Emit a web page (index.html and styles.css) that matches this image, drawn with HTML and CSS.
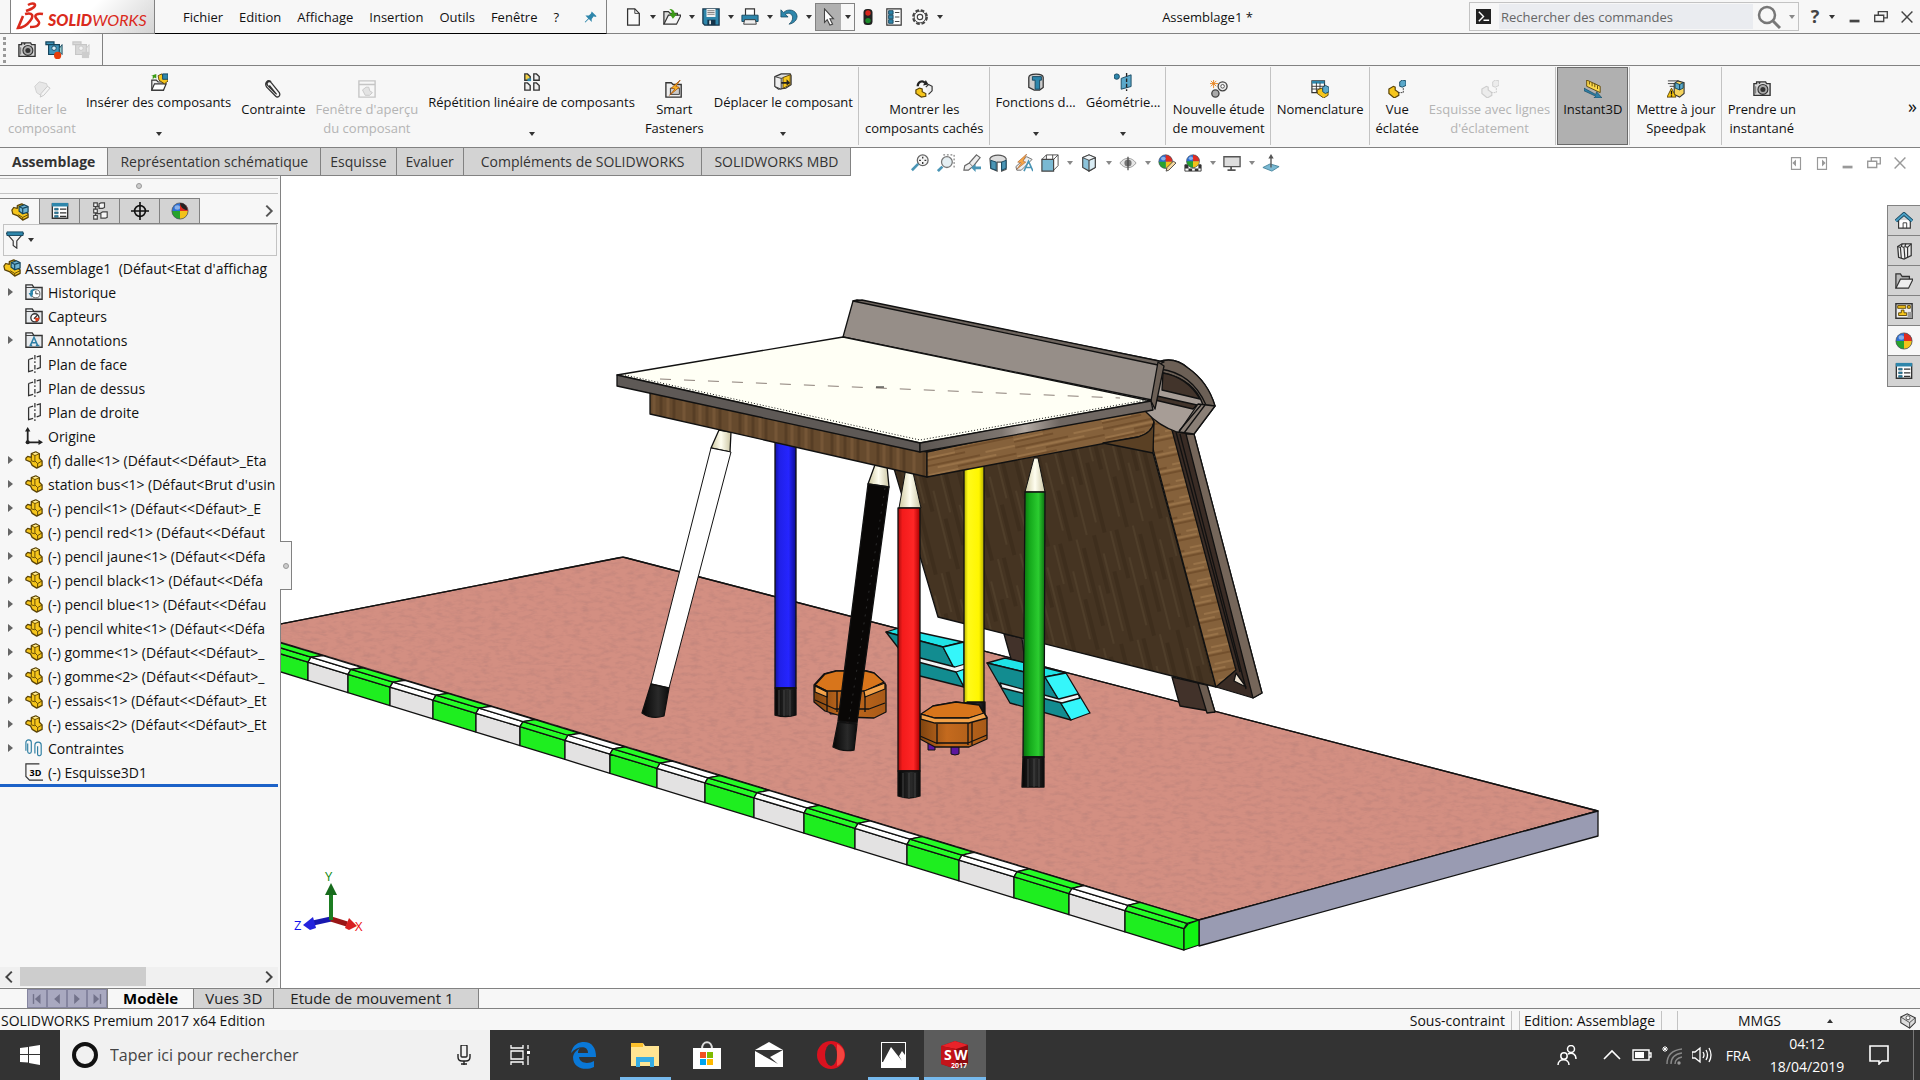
FILE: index.html
```
<!DOCTYPE html>
<html lang="fr">
<head>
  <meta charset="UTF-8">
  <meta name="viewport" content="width=device-width, initial-scale=1.0">
  <title>Assemblage1 * - SOLIDWORKS</title>
  <link rel="stylesheet" href="styles.css">
</head>
<body>
  <!-- Icônes partagées -->
  <svg class="defs" aria-hidden="true">
    <symbol id="i-part" viewBox="0 0 20 20">
      <path d="M1 8l2-2 4 1V3l5-2 4 2v5l3 3v5l-6 3-5-3-2-4-5-2z" fill="#f6c61c" stroke="#5a4307" stroke-width="1.400" stroke-linejoin="round"/>
      <path d="M7 3l4 2 5-2M11 5v6l3 3 5-3M14 14v5M7 7v4l4 1" fill="none" stroke="#5a4307"/>
      <path d="M8.500 3l3.500-1.300L15 3l-4 1.300z" fill="#fdec9a"/>
    </symbol>
    <symbol id="i-asm" viewBox="0 0 20 20">
      <path d="M1 8l2-3 4 1V3l5-2 4 2v7l3 2v4l-6 3-6-5-5-2z" fill="#f6c61c" stroke="#5a4307" stroke-width="1.400" stroke-linejoin="round"/>
      <path d="M8 13l5 3 6-3M13 16v3" fill="none" stroke="#5a4307"/>
      <path d="M9 4l6-2 4 2v6l-6 2-4-3z" fill="#6fb4d3" stroke="#14445c" stroke-width="1.300"/>
      <path d="M9 4l4 2 6-2M13 6v6" fill="none" stroke="#14445c" stroke-width="1.300"/>
    </symbol>
    <symbol id="i-list" viewBox="0 0 20 20">
      <path d="M1.500 2h17v16h-17z" fill="#fff" stroke="#333" stroke-width="1.500"/>
      <path d="M1 1h18v4H1z" fill="#2e86ab"/>
      <path d="M4 7h4v2H4zM4 11h4v2H4zM4 15h4v2H4z" fill="#2e86ab" stroke="#14445c" stroke-width=".6"/>
      <path d="M10 8h7M10 12h7M10 16h7" stroke="#333" stroke-width="1.300"/>
    </symbol>
    <symbol id="i-config" viewBox="0 0 20 20">
      <path d="M5 2v16M5 5h5M5 13h7" fill="none" stroke="#444" stroke-width="1.400"/>
      <path d="M3 1h4v4H3zM3 8h4v4H3zM3 15h4v4H3zM9 2l2-1h4v5l-2 1H9zM11 12l2-1h5v6l-2 1h-5z" fill="#f5f5f5" stroke="#444" stroke-width="1.300"/>
    </symbol>
    <symbol id="i-target" viewBox="0 0 20 20">
      <circle cx="10" cy="10" r="6" fill="none" stroke="#111" stroke-width="1.800"/>
      <path d="M10 0v20M0 10h20" stroke="#111" stroke-width="1.800"/>
    </symbol>
    <symbol id="i-ball" viewBox="0 0 20 20">
      <circle cx="10" cy="10" r="9" fill="#2a6fd6"/>
      <path d="M10 10V1a9 9 0 0 1 9 9z" fill="#e02b20"/>
      <path d="M10 10h9a9 9 0 0 1-9 9z" fill="#f2c21a"/>
      <path d="M10 10v9a9 9 0 0 1-9-9z" fill="#27a32d"/>
      <ellipse cx="7" cy="6" rx="3" ry="2.500" fill="#fff" opacity=".45"/>
      <circle cx="10" cy="10" r="9" fill="none" stroke="#555" stroke-width=".8"/>
    </symbol>
    <symbol id="i-folder" viewBox="0 0 20 20">
      <path d="M1 18V2h7l2 3h9v13z" fill="#e8ebee" stroke="#333" stroke-width="1.500"/>
      <path d="M1 5h18" stroke="#333"/>
    </symbol>
    <symbol id="i-plane" viewBox="0 0 20 20">
      <path d="M4 5l5-1.500M13 2l4-1v13l-4 1.500M9 17l-5 1.500V5" fill="none" stroke="#333" stroke-width="1.400"/>
      <path d="M11 0v20" stroke="#333" stroke-width="1.400" stroke-dasharray="5 2 2 2"/>
    </symbol>
    <symbol id="i-origin" viewBox="0 0 20 20">
      <path d="M3 3v14h14" fill="none" stroke="#222" stroke-width="2"/>
      <path d="M0 5l3-5 3 5zM15 14l5 3-5 3z" fill="#222"/>
      <circle cx="3" cy="17" r="2.300" fill="#222"/>
    </symbol>
    <symbol id="i-clips" viewBox="0 0 20 20">
      <path d="M1 13V4a3 3 0 0 1 6 0v10a2 2 0 0 1-4 0V5M11 16V7a3 3 0 0 1 7 0v9a2 2 0 0 1-4 1V8" fill="none" stroke="#2f7fa3" stroke-width="1.300"/>
    </symbol>
    <symbol id="i-camera" viewBox="0 0 20 20">
      <path d="M1 4h3V2h3v2l1-2h6l1 2h4v13H1z" fill="#d8d8d8" stroke="#333" stroke-width="1.500"/>
      <circle cx="11" cy="10.500" r="5.500" fill="#aaa" stroke="#333" stroke-width="1.300"/>
      <circle cx="11" cy="10.500" r="2.800" fill="#333"/>
      <path d="M3 7v8" stroke="#666"/>
    </symbol>
    <symbol id="i-video" viewBox="0 0 20 20">
      <path d="M1 1h9v3H1zM4 4h12v11H4z" fill="#3f93b8" stroke="#14445c" stroke-width="1.300"/>
      <path d="M16 8l3-4v11l-3-3z" fill="#9cc" stroke="#14445c"/>
      <circle cx="10" cy="8" r="2.500" fill="#d7eef8" stroke="#14445c"/>
    </symbol>
    <symbol id="i-cube" viewBox="0 0 20 20">
      <path d="M3 4l7-3 7 3v11l-7 4-7-4z" fill="#8cc3da" stroke="#444" stroke-width="1.300"/>
      <path d="M10 7l7-3v11l-7 4z" fill="#d9ecf4" stroke="#444" stroke-width="1.300"/>
      <path d="M3 4l7-3 7 3-7 3z" fill="#f0f6f9" stroke="#444"/>
    </symbol>
    <symbol id="i-restore" viewBox="0 0 20 20">
      <path d="M3 8h10v7H3zM7 8V4h10v7h-4" fill="none" stroke="currentColor" stroke-width="1.500"/>
    </symbol>
    <symbol id="i-cross" viewBox="0 0 20 20">
      <path d="M4 4l12 12M16 4L4 16" stroke="currentColor" stroke-width="1.600"/>
    </symbol>
    <symbol id="i-min" viewBox="0 0 20 20">
      <path d="M4 13h11v3H4z" fill="currentColor"/>
    </symbol>
  </svg>

  <header class="titlebar">
    <div class="brand">
      <svg class="ds" viewBox="0 0 28 30"><path d="M12 3c5-3 9-1 6 2-2 2-5 3-8 4M9 12c8-2 9 2 5 7-3 4-8 7-12 7l5-12M27 12c-6-1-9 1-7 4s5 4 2 7c-1 2-5 2-8 2" fill="none" stroke="#da2a1c" stroke-width="2.600"/></svg>
      <span class="logo"><b>SOLID</b>WORKS</span>
    </div>
    <nav class="menu">
      <button>Fichier</button><button>Edition</button><button>Affichage</button><button>Insertion</button><button>Outils</button><button>Fenêtre</button><button>?</button>
      <button class="pin" aria-label="Epingler"><svg viewBox="0 0 20 20"><path d="M11 2l7 7-2 1-2-1-3 4v4l-4-4-5 5-1-1 5-5-4-4h5l3-3z" fill="#2e86ab"/></svg></button>
    </nav>
    <div class="quick">
      <button aria-label="Nouveau"><svg viewBox="0 0 20 20"><path d="M4 1h8l5 5v13H4z" fill="#fafafa" stroke="#333" stroke-width="1.400"/><path d="M12 1v5h5" fill="none" stroke="#333"/></svg></button><i class="caret"></i>
      <button aria-label="Ouvrir"><svg viewBox="0 0 20 20"><path d="M1 18V4h5l2 2h8v3" fill="#ddd" stroke="#333" stroke-width="1.400"/><path d="M1 18l5-10h14l-5 10z" fill="#f5f5f5" stroke="#333" stroke-width="1.300"/><path d="M7 1c4 0 6 2 6 5h3l-5 6-4-6h3c0-2-1-3-3-5z" fill="#3b9b16"/></svg></button><i class="caret"></i>
      <button aria-label="Enregistrer"><svg viewBox="0 0 20 20"><path d="M1 1h18v18H3l-2-2z" fill="#2e86ab" stroke="#14344a" stroke-width="1.400"/><path d="M5 1h10v9H5z" fill="#f2f2f2"/><path d="M6 3h8M6 5h8M6 7h8" stroke="#777"/><path d="M6 13h9v6H6z" fill="#14344a"/><path d="M8 14h2v4H8z" fill="#ddd"/></svg></button><i class="caret"></i>
      <button aria-label="Imprimer"><svg viewBox="0 0 20 20"><path d="M5 8V1h10v7" fill="#fff" stroke="#333" stroke-width="1.300"/><path d="M1 8h18v7H1z" fill="#2e86ab" stroke="#14445c"/><path d="M4 13h12l1 5H3z" fill="#eee" stroke="#333"/></svg></button><i class="caret"></i>
      <button aria-label="Annuler"><svg viewBox="0 0 20 20"><path d="M1 2v8h8L6 7c4-3 8 0 8 4 0 3-2 5-4 7 6-1 9-5 9-9C18 2 9 0 4 5z" fill="#2e86ab" stroke="#14445c" stroke-width=".8"/></svg></button><i class="caret"></i>
      <span class="pick"><button aria-label="Sélectionner"><svg viewBox="0 0 20 20"><path d="M5 1l10 11H11l3 6-3 1-3-6-3 3z" fill="#fff" stroke="#444" stroke-width="1.200"/></svg></button><i class="caret"></i></span>
      <button aria-label="Reconstruire"><svg viewBox="0 0 20 20"><rect x="5" y="1" width="10" height="18" rx="4" fill="#222"/><circle cx="10" cy="5.500" r="3" fill="#d8261c"/><circle cx="10" cy="14" r="3" fill="#1c8a2a"/></svg></button>
      <button aria-label="Propriétés"><svg viewBox="0 0 20 20"><path d="M2 1h16v18H2z" fill="#fff" stroke="#333" stroke-width="1.300"/><path d="M4 3h5v4H4zM4 8h5v4H4zM4 13h5v4H4z" fill="#2e86ab" stroke="#14445c"/><path d="M11 5h5M11 10h5M11 15h5" stroke="#333"/></svg></button>
      <button aria-label="Options"><svg viewBox="0 0 20 20"><circle cx="10" cy="10" r="7.500" fill="none" stroke="#444" stroke-width="2.600" stroke-dasharray="4 2"/><circle cx="10" cy="10" r="6.500" fill="#f7f7f7" stroke="#444"/><circle cx="10" cy="10" r="3" fill="#fff" stroke="#444" stroke-width="1.300"/></svg></button><i class="caret"></i>
    </div>
    <h1 class="doc-title">Assemblage1 *</h1>
    <form class="cmd-search">
      <svg class="prompt" viewBox="0 0 16 16"><path d="M0 0h16v16H0z" fill="#222"/><path d="M3 3l5 5-5 5M8 12h6" fill="none" stroke="#fff" stroke-width="1.500"/></svg>
      <input type="text" aria-label="Rechercher des commandes" placeholder="Rechercher des commandes">
      <button type="button" aria-label="Rechercher"><svg viewBox="0 0 24 24"><circle cx="10" cy="10" r="8" fill="none" stroke="#777" stroke-width="2.500"/><path d="M16 16l7 7" stroke="#777" stroke-width="3"/></svg></button>
      <i class="caret soft"></i>
    </form>
    <div class="win-buttons">
      <button class="help">?<i class="caret"></i></button>
      <button aria-label="Réduire"><svg viewBox="0 0 20 20"><use href="#i-min"/></svg></button>
      <button aria-label="Restaurer"><svg viewBox="0 0 20 20"><use href="#i-restore"/></svg></button>
      <button aria-label="Fermer"><svg viewBox="0 0 20 20"><use href="#i-cross"/></svg></button>
    </div>
  </header>

  <div class="capture-bar">
    <span class="grip"></span>
    <button aria-label="Capture"><svg viewBox="0 0 20 20"><use href="#i-camera"/></svg></button>
    <button aria-label="Enregistrer la vidéo"><svg viewBox="0 0 20 20"><use href="#i-video"/><circle cx="14" cy="16" r="4" fill="#e63c0a"/></svg></button>
    <button aria-label="Arrêter" disabled><svg viewBox="0 0 20 20"><use href="#i-video"/><path d="M11 12h8v7h-8z" fill="#555"/></svg></button>
  </div>

  <div class="ribbon">
    <button disabled><svg viewBox="0 0 20 20"><path d="M2 7l5-5 8 2 2 6-7 8-6-4z" fill="#bbb" stroke="#555"/><path d="M8 19l1-4 7-8 3 2-7 8z" fill="#eee" stroke="#333"/></svg><span>Editer le<br>composant</span></button>
    <button class="drop"><svg viewBox="0 0 20 20"><path d="M2 19V8h5l2 2h6v9z" fill="#eee" stroke="#333" stroke-width="1.300"/><path d="M2 19l3-7h13l-3 7z" fill="#fff" stroke="#333" stroke-width="1.300"/><path d="M3 7V3H1l6-2v5L5 5z" fill="#3b9b16"/><path d="M9 3l4-2 2 4h5v4l-4 3-6-4z" fill="#f6c61c" stroke="#5a4307"/><path d="M14 1h6v6h-6z" fill="#2e86ab" stroke="#14445c"/></svg><span>Insérer des composants</span><i class="caret"></i></button>
    <button><svg viewBox="0 0 20 20"><path d="M13 15L4 6C2 3 6 0 8 3l9 11c2 4-2 6-4 4L3 8C0 3 4-1 8 2M6 6l8 10" fill="none" stroke="#333" stroke-width="1.400"/></svg><span>Contrainte</span></button>
    <button disabled><svg viewBox="0 0 20 20"><path d="M1 1h18v18H1zM1 5h18" fill="none" stroke="#333" stroke-width="1.500"/><path d="M5 11l4-3h3l1 4 3 2-3 3H8z" fill="#aaa" stroke="#333"/></svg><span>Fenêtre d'aperçu<br>du composant</span></button>
    <button class="drop"><svg viewBox="0 0 20 20"><path d="M2 1h3l3 3v4H2z" fill="#f6d44a" stroke="#333" stroke-width="1.500"/><path d="M12 1h3l3 3v4h-6zM2 11h3l3 3v5H2zM12 11h3l3 3v5h-6z" fill="#eee" stroke="#333" stroke-width="1.500"/><path d="M5 6h4v3H5z" fill="#2e86ab"/></svg><span>Répétition linéaire de composants</span><i class="caret"></i></button>
    <button><svg viewBox="0 0 20 20"><path d="M1 19V3h6l2 2h9v14z" fill="#eee" stroke="#333" stroke-width="1.500"/><path d="M6 9h10v7H6z" fill="#ccc" stroke="#333"/><path d="M17 0L7 9l4 1-6 7 11-9-4-1z" fill="#f8b224" stroke="#a24a06" stroke-width=".8"/></svg><span>Smart<br>Fasteners</span></button>
    <button class="drop"><svg viewBox="0 0 20 20"><path d="M1 4l7-3h10l1 2v10l-6 4-8 1-4-3z" fill="#ddd" stroke="#333" stroke-width="1.300"/><path d="M1 4l7 2v12l-7-3zM8 6l10-3" fill="#eee" stroke="#333"/><path d="M10 5l8-3v11l-8 4z" fill="#f6c61c" stroke="#5a4307"/><path d="M8 10h6V7l4 4-4 3v-2H8z" fill="#222"/></svg><span>Déplacer le composant</span><i class="caret"></i></button>
    <hr>
    <button><svg viewBox="0 0 20 20"><path d="M3 7c0-5 5-7 8-4" fill="none" stroke="#222" stroke-width="2.500"/><path d="M9 6l6-1-3-5z" fill="#222"/><path d="M1 11l4-2 3 1v3l4 2v3l-5 1-6-4z" fill="#f6c61c" stroke="#5a4307" stroke-width="1.300"/><path d="M12 8l3-3 4 2v5l-4 4" fill="#eee" stroke="#333" stroke-width="1.300"/></svg><span>Montrer les<br>composants cachés</span></button>
    <hr>
    <button class="drop"><svg viewBox="0 0 20 20"><path d="M2 5c0-5 16-5 16 0v11l-4 3H8l-6-3z" fill="#ccc" stroke="#333" stroke-width="1.400"/><path d="M6 4h10v4h-2v10H9V8H6z" fill="#2e86ab" stroke="#14445c"/></svg><span>Fonctions d...</span><i class="caret"></i></button>
    <button class="drop"><svg viewBox="0 0 20 20"><circle cx="3" cy="4" r="3" fill="#2e86ab" stroke="#14445c"/><path d="M8 6l11-4v13L8 18z" fill="#5aa8ca" stroke="#14445c"/><path d="M14 0v20" stroke="#222" stroke-width="1.500" stroke-dasharray="4 2"/></svg><span>Géométrie...</span><i class="caret"></i></button>
    <hr>
    <button><svg viewBox="0 0 20 20"><circle cx="14" cy="7" r="5" fill="#eee" stroke="#444" stroke-width="1.500"/><circle cx="14" cy="7" r="2" fill="#fff" stroke="#444"/><circle cx="6" cy="15" r="4" fill="#aaa" stroke="#444" stroke-width="1.500"/><path d="M4 0v9M0 4h9M1 1l6 6M7 1L1 7" stroke="#e7801a"/></svg><span>Nouvelle étude<br>de mouvement</span></button>
    <hr>
    <button><svg viewBox="0 0 20 20"><path d="M1 1h14v13H1z" fill="#fff" stroke="#333" stroke-width="1.300"/><path d="M1 1h14v3H1z" fill="#2e86ab"/><path d="M1 7h14M1 10h14M6 3v11M10 3v11" stroke="#333"/><path d="M7 11l5-2 2 3 5 1v4l-5 3-7-5z" fill="#f6c61c" stroke="#5a4307"/><path d="M13 8l3-2 4 2v5l-4 2-3-2z" fill="#5aa8ca" stroke="#14445c"/></svg><span>Nomenclature</span></button>
    <hr>
    <button><svg viewBox="0 0 20 20"><path d="M1 10l5-3 2 1v3l4 3v3l-5 3-6-5z" fill="#f6c61c" stroke="#5a4307" stroke-width="1.300"/><path d="M13 2l3-2 4 1v5l-4 2-3-1z" fill="#5aa8ca" stroke="#14445c"/><path d="M17 9v5h-6" fill="none" stroke="#333" stroke-dasharray="2 1"/></svg><span>Vue<br>éclatée</span></button>
    <button disabled><svg viewBox="0 0 20 20"><path d="M1 10l5-3 2 1v3l4 3v3l-5 3-6-5z" fill="#ccc" stroke="#555" stroke-width="1.300"/><path d="M13 2l3-2 4 1v5l-4 2-3-1z" fill="#ccc" stroke="#555"/><path d="M17 9v5h-6" fill="none" stroke="#333" stroke-dasharray="2 1"/></svg><span>Esquisse avec lignes<br>d'éclatement</span></button>
    <hr>
    <button class="on"><svg viewBox="0 0 20 20"><path d="M3 0l15 7v7L3 7z" fill="#fbd84a" stroke="#5a4307"/><path d="M6 2v3M9 3v4M12 4v4M15 6v4" stroke="#5a4307"/><path d="M0 9l13 7 1-3 6 7h-9l2-2L0 12z" fill="#2e7fa6" stroke="#14445c" stroke-width=".7"/></svg><span>Instant3D</span></button>
    <hr>
    <button><svg viewBox="0 0 20 20"><path d="M1 1h12M1 4h8M3 7h5" stroke="#333"/><path d="M8 4l4-3 7 2v12l-5 4-6-3z" fill="#f4d35c" stroke="#333" stroke-width="1.200"/><path d="M9 3l5 2v6l-5-2zM14 5l4-2v6l-4 2z" fill="#5aa8ca" stroke="#14445c"/><path d="M5 9l5 10H0z" fill="#fbc90d" stroke="#5a4307"/><path d="M5 12v4M5 17v1.500" stroke="#111" stroke-width="1.500"/></svg><span>Mettre à jour<br>Speedpak</span></button>
    <hr>
    <button><svg viewBox="0 0 20 20"><use href="#i-camera"/></svg><span>Prendre un<br>instantané</span></button>
    <button class="more">»</button>
  </div>

  <div class="tab-row">
    <nav class="tabs">
      <button class="active">Assemblage</button><button>Représentation schématique</button><button class="narrow">Esquisse</button><button class="narrow">Evaluer</button><button class="wide">Compléments de SOLIDWORKS</button><button>SOLIDWORKS MBD</button>
    </nav>
    <div class="view-tools">
      <button aria-label="Zoom au mieux"><svg viewBox="0 0 20 20"><circle cx="13" cy="7" r="6" fill="#f4f4f4" stroke="#666" stroke-width="1.400"/><path d="M13 3v2M13 9v2M9 7h2M15 7h2" stroke="#333" stroke-width="1.500"/><path d="M8 11l-7 7" stroke="#4a95b5" stroke-width="3"/></svg></button>
      <button aria-label="Zoom fenêtre"><svg viewBox="0 0 20 20"><path d="M7 1h12v14" fill="none" stroke="#555" stroke-dasharray="2 2"/><circle cx="11" cy="9" r="6" fill="#e5eff3" stroke="#777" stroke-width="1.400"/><path d="M6 14l-5 5" stroke="#4a95b5" stroke-width="3"/></svg></button>
      <button aria-label="Vue précédente"><svg viewBox="0 0 20 20"><path d="M15 1l4 3-7 9-6 5-5 0 1-5 5-3z" fill="#eee" stroke="#666" stroke-width="1.300"/><path d="M7 10l4 4" stroke="#666"/><path d="M9 15l5-4v3h6v3h-6v3z" fill="#4a95b5"/></svg></button>
      <button aria-label="Vue en coupe"><svg viewBox="0 0 20 20"><path d="M1 5c3-5 15-5 18 0v12l-5 2V9H9v10l-7-3z" fill="#ddd" stroke="#555" stroke-width="1.300"/><path d="M2 7l6 2v9l-6-2zM14 9l5-2v9l-5 2z" fill="#4a95b5" stroke="#14445c"/></svg></button>
      <button aria-label="Annotations dynamiques"><svg viewBox="0 0 20 20"><path d="M13 3l6 3-12 12-5 0-1-4z" fill="#eee" stroke="#666"/><path d="M13 0L3 9l4 1-5 7 10-8-3-1z" fill="#f7a545" stroke="#a05a2a" stroke-width=".6"/><path d="M10 19l5-11 5 11M12 15h6" fill="none" stroke="#4a95b5" stroke-width="1.800"/></svg></button>
      <button aria-label="Orientation"><svg viewBox="0 0 20 20"><path d="M6 1h13v12l-5 5M6 1v5M6 1L1 6M19 1l-5 5M13 1v5" fill="none" stroke="#444"/><path d="M1 6h13v13H1z" fill="#7ab9d3" stroke="#444" stroke-width="1.300"/></svg></button><i class="caret soft"></i>
      <button aria-label="Style d'affichage"><svg viewBox="0 0 20 20"><use href="#i-cube"/></svg></button><i class="caret soft"></i>
      <button aria-label="Cacher/Montrer"><svg viewBox="0 0 20 20"><path d="M1 10c5-7 13-7 18 0-5 7-13 7-18 0z" fill="#e6e6e6" stroke="#999"/><circle cx="10" cy="10" r="4" fill="#777"/><path d="M10 3v15" stroke="#444" stroke-width="1.300"/></svg></button><i class="caret soft"></i>
      <button aria-label="Apparence"><svg viewBox="0 0 20 20"><use href="#i-ball" width="17" height="17"/><path d="M9 19l1-4 7-7 3 2-8 8z" fill="#f6d9a0" stroke="#444"/></svg></button>
      <button aria-label="Scène"><svg viewBox="0 0 20 20"><path d="M1 12h18v7H1z" fill="#fff" stroke="#333"/><path d="M1 12h4v4H1zM5 16h4v3H5zM9 12h3v4H9zM12 16h4v3h-4zM16 12h3v4h-3z" fill="#333"/><use href="#i-ball" x="2" y="0" width="16" height="16"/></svg></button><i class="caret soft"></i>
      <button aria-label="Paramètres de vue"><svg viewBox="0 0 20 20"><path d="M1 3h18v11H1z" fill="#ddd" stroke="#555" stroke-width="1.500"/><path d="M9 14v3M5 18h9" stroke="#555" stroke-width="2"/></svg></button><i class="caret soft"></i>
      <button aria-label="Normal à"><svg viewBox="0 0 20 20"><path d="M1 15l8-4 10 3-8 5z" fill="#7ab9d3" stroke="#44839c"/><path d="M10 15V4" stroke="#555" stroke-width="1.500"/><path d="M7 5l3-5 3 5z" fill="#555"/></svg></button>
    </div>
    <div class="doc-buttons">
      <button aria-label="Panneau gauche"><svg viewBox="0 0 20 20"><path d="M5 4h10v13H5z" fill="none" stroke="currentColor" stroke-width="1.300"/><path d="M10 6v8l-4-4z" fill="currentColor"/></svg></button>
      <button aria-label="Panneau droit"><svg viewBox="0 0 20 20"><path d="M5 4h10v13H5z" fill="none" stroke="currentColor" stroke-width="1.300"/><path d="M10 6v8l4-4z" fill="currentColor"/></svg></button>
      <button aria-label="Réduire"><svg viewBox="0 0 20 20"><use href="#i-min"/></svg></button>
      <button aria-label="Restaurer"><svg viewBox="0 0 20 20"><use href="#i-restore"/></svg></button>
      <button aria-label="Fermer"><svg viewBox="0 0 20 20"><use href="#i-cross"/></svg></button>
    </div>
  </div>

  <main class="workspace">
    <aside class="manager">
      <div class="splitter"><i class="knob"></i></div>
      <div class="manager-tabs">
        <button class="active" aria-label="Arbre"><svg viewBox="0 0 20 20"><use href="#i-asm"/></svg></button>
        <button aria-label="Propriétés"><svg viewBox="0 0 20 20"><use href="#i-list"/></svg></button>
        <button aria-label="Configurations"><svg viewBox="0 0 20 20"><use href="#i-config"/></svg></button>
        <button aria-label="DimXpert"><svg viewBox="0 0 20 20"><use href="#i-target"/></svg></button>
        <button aria-label="Affichage"><svg viewBox="0 0 20 20"><use href="#i-ball"/><path d="M10 1c5 0 8 4 8 8-4 0-8-4-8-8z" fill="#222"/></svg></button>
        <button class="next" aria-label="Suivant"><svg viewBox="0 0 20 20"><path d="M7 4l6 6-6 6" fill="none" stroke="#555" stroke-width="2.200"/></svg></button>
      </div>
      <div class="filter">
        <svg viewBox="0 0 20 20"><path d="M1 3h18l-7 8v8l-4-3v-5z" fill="#f4f4f4" stroke="#333" stroke-width="1.300"/><path d="M1 1h18v4H1z" fill="#2e86ab" stroke="#14445c"/></svg><i class="caret"></i>
        <input type="text" aria-label="Filtrer">
      </div>
      <ul class="tree">
        <li class="root"><svg viewBox="0 0 20 20"><use href="#i-asm"/></svg>Assemblage1&nbsp; (Défaut&lt;Etat d'affichag</li>
        <li class="node"><svg viewBox="0 0 20 20"><use href="#i-folder"/><circle cx="12" cy="12" r="4.500" fill="#fff" stroke="#555"/><path d="M12 9v3h3" fill="none" stroke="#333"/><path d="M4 11l3 5 2-4c-1-4 2-5 4-5-5-1-8 1-7 4z" fill="#2e86ab"/></svg>Historique</li>
        <li><svg viewBox="0 0 20 20"><use href="#i-folder"/><circle cx="11" cy="12" r="4.500" fill="#fff" stroke="#333" stroke-width="1.500"/><path d="M10 13l4-4" stroke="#333" stroke-width="1.500"/><path d="M11 12h5c0 3-2 4-4 4z" fill="#e03c1a"/></svg>Capteurs</li>
        <li class="node"><svg viewBox="0 0 20 20"><use href="#i-folder"/><path d="M6 16l4-9 4 9M8 13h5M5 16h3M12 16h4" fill="none" stroke="#2e7fa6" stroke-width="1.700"/></svg>Annotations</li>
        <li><svg viewBox="0 0 20 20"><use href="#i-plane"/></svg>Plan de face</li>
        <li><svg viewBox="0 0 20 20"><use href="#i-plane"/></svg>Plan de dessus</li>
        <li><svg viewBox="0 0 20 20"><use href="#i-plane"/></svg>Plan de droite</li>
        <li><svg viewBox="0 0 20 20"><use href="#i-origin"/></svg>Origine</li>
        <li class="node"><svg viewBox="0 0 20 20"><use href="#i-part"/></svg>(f) dalle&lt;1&gt; (Défaut&lt;&lt;Défaut&gt;_Eta</li>
        <li class="node"><svg viewBox="0 0 20 20"><use href="#i-part"/></svg>station bus&lt;1&gt; (Défaut&lt;Brut d'usin</li>
        <li class="node"><svg viewBox="0 0 20 20"><use href="#i-part"/></svg>(-) pencil&lt;1&gt; (Défaut&lt;&lt;Défaut&gt;_E</li>
        <li class="node"><svg viewBox="0 0 20 20"><use href="#i-part"/></svg>(-) pencil red&lt;1&gt; (Défaut&lt;&lt;Défaut</li>
        <li class="node"><svg viewBox="0 0 20 20"><use href="#i-part"/></svg>(-) pencil jaune&lt;1&gt; (Défaut&lt;&lt;Défa</li>
        <li class="node"><svg viewBox="0 0 20 20"><use href="#i-part"/></svg>(-) pencil black&lt;1&gt; (Défaut&lt;&lt;Défa</li>
        <li class="node"><svg viewBox="0 0 20 20"><use href="#i-part"/></svg>(-) pencil blue&lt;1&gt; (Défaut&lt;&lt;Défau</li>
        <li class="node"><svg viewBox="0 0 20 20"><use href="#i-part"/></svg>(-) pencil white&lt;1&gt; (Défaut&lt;&lt;Défa</li>
        <li class="node"><svg viewBox="0 0 20 20"><use href="#i-part"/></svg>(-) gomme&lt;1&gt; (Défaut&lt;&lt;Défaut&gt;_</li>
        <li class="node"><svg viewBox="0 0 20 20"><use href="#i-part"/></svg>(-) gomme&lt;2&gt; (Défaut&lt;&lt;Défaut&gt;_</li>
        <li class="node"><svg viewBox="0 0 20 20"><use href="#i-part"/></svg>(-) essais&lt;1&gt; (Défaut&lt;&lt;Défaut&gt;_Et</li>
        <li class="node"><svg viewBox="0 0 20 20"><use href="#i-part"/></svg>(-) essais&lt;2&gt; (Défaut&lt;&lt;Défaut&gt;_Et</li>
        <li class="node"><svg viewBox="0 0 20 20"><use href="#i-clips"/></svg>Contraintes</li>
        <li><svg viewBox="0 0 20 20"><path d="M16 1H1v14l4 4h15" fill="none" stroke="#333" stroke-width="1.300"/><text class="tag3d" x="5" y="14">3D</text></svg>(-) Esquisse3D1</li>
      </ul>
      <div class="scrollbar">
        <button aria-label="Défiler à gauche"><svg viewBox="0 0 20 20"><path d="M12 4l-6 6 6 6" fill="none" stroke="#444" stroke-width="2.200"/></svg></button>
        <div class="track"><div class="thumb"></div></div>
        <button aria-label="Défiler à droite"><svg viewBox="0 0 20 20"><path d="M8 4l6 6-6 6" fill="none" stroke="#444" stroke-width="2.200"/></svg></button>
      </div>
      <button class="handle" aria-label="Replier le panneau"><i class="knob"></i></button>
    </aside>

    <section class="viewport">
      <svg class="scene" viewBox="281 176 1639 812" preserveAspectRatio="xMinYMin slice">
        <defs>
          <filter id="grit" x="0" y="0" width="100%" height="100%">
            <feTurbulence type="fractalNoise" baseFrequency=".11 .26" numOctaves="3" seed="4"/>
            <feColorMatrix values="0 0 0 0 .42  0 0 0 0 .2  0 0 0 0 .18  0 0 1 0 -.440"/>
            <feComposite in2="SourceGraphic" operator="in" result="n"/>
            <feMerge><feMergeNode in="SourceGraphic"/><feMergeNode in="n"/></feMerge>
          </filter>
          <pattern id="wood-front" width="46" height="90" patternUnits="userSpaceOnUse">
            <path d="M0 0h46v90H0z" fill="#664a2d"/><path d="M4 0v90M17 0v90M30 0v90" stroke="#573e25" stroke-width="3"/><path d="M10 0v90M24 0v90M40 0v90" stroke="#755636" stroke-width="3"/>
          </pattern>
          <pattern id="wood-side" width="90" height="17" patternUnits="userSpaceOnUse" patternTransform="rotate(-12)">
            <path d="M0 0h90v17H0z" fill="#85613b"/><path d="M0 3h54M30 9h60M0 14h40" stroke="#73502d" stroke-width="2"/><path d="M10 6h60M0 12h30M60 1h30" stroke="#987248" stroke-width="2"/>
          </pattern>
          <pattern id="wood-dark" width="58" height="112" patternUnits="userSpaceOnUse" patternTransform="rotate(-14)">
            <path d="M0 0h58v112H0z" fill="#453422"/><path d="M4 0v60M15 40v72M27 0v50M38 60v52M49 10v80" stroke="#3e2e1d" stroke-width="4"/><path d="M9 20v80M21 0v40M33 30v70M44 0v55M55 50v60" stroke="#4f3e2a" stroke-width="2"/>
          </pattern>
          <linearGradient id="blue"><stop offset="0" stop-color="#1212a0"/><stop offset=".2" stop-color="#2020e8"/><stop offset=".65" stop-color="#2525ff"/><stop offset="1" stop-color="#0e0e90"/></linearGradient>
          <linearGradient id="red"><stop offset="0" stop-color="#a80d0d"/><stop offset=".2" stop-color="#f31b1b"/><stop offset=".7" stop-color="#ff2626"/><stop offset="1" stop-color="#a00"/></linearGradient>
          <linearGradient id="yellow"><stop offset="0" stop-color="#b9b400"/><stop offset=".2" stop-color="#fffa1a"/><stop offset=".75" stop-color="#fff600"/><stop offset="1" stop-color="#b5ae00"/></linearGradient>
          <linearGradient id="green"><stop offset="0" stop-color="#0a6d0e"/><stop offset=".3" stop-color="#14a81b"/><stop offset=".7" stop-color="#2ccc30"/><stop offset="1" stop-color="#0b7010"/></linearGradient>
          <linearGradient id="tip"><stop offset="0" stop-color="#cfc9a0"/><stop offset=".5" stop-color="#fffef0"/><stop offset="1" stop-color="#ccc6a4"/></linearGradient>
          <linearGradient id="end"><stop offset="0" stop-color="#050505"/><stop offset=".6" stop-color="#2a2a2a"/><stop offset="1" stop-color="#0c0c0c"/></linearGradient>
          <linearGradient id="slab"><stop offset="0" stop-color="#5c5652"/><stop offset=".35" stop-color="#7d756f"/><stop offset=".45" stop-color="#b3aaa3"/><stop offset=".6" stop-color="#6f6762"/></linearGradient>
          <linearGradient id="seat"><stop offset="0" stop-color="#7d430f"/><stop offset=".4" stop-color="#c46a1e"/><stop offset="1" stop-color="#a85a17"/></linearGradient>
        </defs>

        <!-- Dalle -->
        <g class="ink">
          <path d="M270 626L623 557l975 254-399 109L270 639z" fill="#d38f82" filter="url(#grit)"/>
          <path d="M270 626L623 557l975 254-399 109" fill="none"/>
          <path d="M1598 811v25l-399 110v-26z" fill="#999bb2"/>
        </g>
        <g id="kerb" class="ink"></g>

        <!-- Panneau arrière -->
        <g class="ink">
          <path d="M1004 634l18 4 3 25-14-4zM1172 677l35 8 8 27-35-6z" fill="#42322a"/>
          <path d="M1198 683l9 2 8 27-8 1z" fill="#6d5d51"/>
          <path d="M890 455l48 162 278 70-63-234-40-20z" fill="url(#wood-dark)"/>
          <path d="M1146 412l8 41 62 234 22-18-64-238z" fill="url(#wood-side)"/>
          <path d="M1172 430l22 4 68 259-9 5-37-11 20-17z" fill="#3a2c25"/>
          <path d="M1186 434l8 0 68 259-9 5z" fill="#75665a"/>
          <path d="M1180 434l66 255M1176 432l64 240" fill="none"/>
          <path d="M1236 673l10 14-12-6z" fill="#eee4d4"/>
        </g>

        <!-- Bancs cyan -->
        <g class="ink">
          <path d="M886 632l13-4 64 14-20 5z" fill="#1fe3e6"/>
          <path d="M886 632l57 15 21 40-44-11z" fill="#128c90"/>
          <path d="M943 647l21-5v45z" fill="#35f6fa"/>
          <path d="M901 653l54 14 10-3v5l-9 3-53-14z" fill="#f4f4f4"/>
          <path d="M987 663l18-5 61 15-21 4z" fill="#1fe3e6"/>
          <path d="M987 663l58 14 26 43-61-17z" fill="#128c90"/>
          <path d="M1045 677l21-4 24 40-19 7z" fill="#35f6fa"/>
          <path d="M1000 683l59 16 19-5 2 4-18 5-60-15z" fill="#f4f4f4"/>
        </g>

        <!-- Crayons et tabourets -->
        <g class="ink">
          <path d="M719 430l12 2-1 20-19-4z" fill="url(#tip)"/>
          <path class="thin" d="M711 448l20 4-62 236-18-4z" fill="#fff"/>
          <path d="M651 684l18 4-5 28q-12 4-22-3z" fill="url(#end)"/>
          <path d="M775 440h21v248h-21z" fill="url(#blue)"/><path d="M775 688h21v27q-10 3-21 0z" fill="url(#end)"/>
          <path d="M964 462h20v241h-20z" fill="url(#yellow)"/><path d="M967 702h18v15h-18z" fill="url(#end)"/>
          <path class="thin" d="M830 706h6v8h-6zM862 706h6v8h-6zM928 742h7v8h-7zM951 745h8v9q-4 2-8 0z" fill="#5b189e"/>
          <path d="M824 674l12-3h30l8 2 12 12v27l-12 6-30-1-19-6-11-9V685z" fill="url(#seat)"/>
          <path d="M825 674l11-3h30l8 2 10 9-19 9h-38l-12-6z" fill="#d8751b"/>
          <path d="M815 685l12 6v21M865 691v21M837 691v21M815 700l20 9h34l16-6" fill="none"/><path d="M864 691l21-8v6l-20 8zM815 686l12 6v5l-12-5z" fill="#f2a24a"/>
          <path d="M933 706l23-4 23 3 8 12v22l-18 8h-34l-15-8V717z" fill="url(#seat)"/>
          <path d="M933 706l23-4 23 3 5 9-15 4h-34l-14-4z" fill="#d8751b"/>
          <path d="M937 724v20M968 722v23M972 719v26M920 736l16 7h32l19-8" fill="none"/><path d="M921 714l14 4h34l15-5 3 5-18 5h-34l-14-4z" fill="#f2a24a"/>
          <path d="M876 462l11 4 2 21-21-3z" fill="url(#tip)"/>
          <path d="M868 484l21 3-32 236-19-2z" fill="#090706"/><path d="M838 722l19 2-3 26q-12 2-21-3z" fill="url(#end)"/>
          <path class="thin" d="M885 488l-36 232" fill="none" stroke="#2c2c2c" stroke-dasharray="2 6"/>
          <path class="thin" d="M906 468h6l9 40h-22z" fill="url(#tip)"/>
          <path d="M898 508h22v263h-22z" fill="url(#red)"/><path d="M898 771h22v25q-11 4-22 0z" fill="url(#end)"/>
          <path class="thin" d="M1034 458h4l7 34h-20z" fill="url(#tip)"/>
          <path d="M1025 492h20l-1 265h-21z" fill="url(#green)"/><path d="M1023 757h21v30h-22z" fill="url(#end)"/>
          <path class="thin" d="M779 690v25M784 690v26M790 690v26M903 773v25M909 773v25M915 773v25M1028 759v28M1034 759v28M1039 759v28" fill="none" stroke="#444"/>
        </g>

        <!-- Toit -->
        <g class="ink">
          <path d="M650 388l277 64v25l-277-63z" fill="url(#wood-front)"/>
          <path d="M927 452l219-46 8 16q-2 11-16 15l-211 40z" fill="url(#wood-side)"/>
          <path d="M1103 443l50 10 1-31q-2 11-16 15z" fill="#5a4024"/>
          <path d="M1158 362q16-6 30 6 20 14 27 38l-21 28-17-2q-18-6-31-20l7-10z" fill="#a79d96"/>
          <path d="M1158 362q16-6 30 6 20 14 27 38l-12-1q-8-25-40-32z" fill="#6c6056"/>
          <path d="M1163 373q24 4 37 26l-38-9zM1157 396l40 9-4 4-38-9z" fill="#42342b"/>
          <path d="M1160 369q32 4 46 36" fill="none"/>
          <path d="M1198 404l17 2-21 28-15-2z" fill="#8a7f76"/><path d="M1205 405l-21 28M1201 405l-22 26" fill="none"/>
          <path d="M853 301l4-1 302 61-7 39-309-63z" fill="#968e88"/>
          <path d="M853 301l9-1 302 62-6 3z" fill="#6e655e"/>
          <path d="M1158 362l6 4-9 43-4-8z" fill="#6c6056"/>
          <path d="M843 337l308 64-231 42-303-68z" fill="#fffff5"/>
          <path d="M617 375l303 68v9l-303-66z" fill="#5e5956"/>
          <path d="M920 443l231-42 2 9-233 42z" fill="url(#slab)"/>
          <path class="thin" d="M625 375l295 65 226-40" fill="none" stroke-dasharray="1 2"/>
          <path class="thin" d="M660 379l460 19" fill="none" stroke="#8c8079" stroke-dasharray="11 13"/>
          <path class="thin" d="M876 387h8" fill="none"/>
        </g>

        <!-- Triade -->
        <g>
          <path d="M331 919l-18 4" stroke="#1818b0" stroke-width="5"/><path d="M303 925l10-8 3 11-6 2z" fill="#2323dd"/>
          <path d="M331 919l16 5" stroke="#991616" stroke-width="5"/><path d="M357 926l-8-8-4 10 4 2z" fill="#d62020"/>
          <path d="M331 920v-28" stroke="#1d7d22" stroke-width="4"/><path d="M331 883l6 12h-12z" fill="#176b1c"/>
          <text class="axis" x="325" y="881" fill="#138a13">Y</text><text class="axis" x="294" y="930" fill="#11e">Z</text><text class="axis" x="355" y="931" fill="#e11">X</text>
        </g>
      </svg>
      <nav class="task-pane">
        <button aria-label="Accueil"><svg viewBox="0 0 20 20"><path d="M4 9v9h13V9" fill="#fff" stroke="#333" stroke-width="1.300"/><path d="M9 18v-6h4v6" fill="none" stroke="#333"/><path d="M1 10l9-8 9 8" fill="none" stroke="#14445c" stroke-width="4"/><path d="M1 10l9-8 9 8" fill="none" stroke="#4a9fc4" stroke-width="2"/></svg></button>
        <button aria-label="Bibliothèque"><svg viewBox="0 0 20 20"><path d="M3 5l5-3 10 0v13l-8 4-6-2z" fill="#eee" stroke="#333" stroke-width="1.400"/><path d="M3 5l3 1 1 12M8 2l-1 3 3 1 1 12M12 2l-1 3 3 1v11M18 2l-4 4" fill="none" stroke="#333" stroke-width="1.300"/></svg></button>
        <button aria-label="Explorateur"><svg viewBox="0 0 20 20"><path d="M1 18V2h5l2 3h8v3" fill="#bbb" stroke="#333" stroke-width="1.400"/><path d="M1 18L6 8h14l-5 10z" fill="#eee" stroke="#333" stroke-width="1.300"/></svg></button>
        <button aria-label="Palette de vues"><svg viewBox="0 0 20 20"><path d="M1 2h18v16H1z" fill="#eee" stroke="#333" stroke-width="1.600"/><path d="M3 4h9v3H3zM14 4h3v3h-3zM7 9h3v3h3v3H4v-3h3z" fill="#f6c61c" stroke="#5a4307"/><path d="M14 11h5v7h-5z" fill="#999"/></svg></button>
        <button class="active" aria-label="Apparences"><svg viewBox="0 0 20 20"><use href="#i-ball"/></svg></button>
        <button aria-label="Propriétés personnalisées"><svg viewBox="0 0 20 20"><use href="#i-list"/></svg></button>
      </nav>
    </section>
  </main>

  <nav class="sheets">
    <div class="steps">
      <button aria-label="Premier"><svg viewBox="0 0 20 20"><path d="M5 3v14" stroke="#72728a" stroke-width="2"/><path d="M15 3v14l-8-7z" fill="#72728a"/></svg></button><button aria-label="Précédent"><svg viewBox="0 0 20 20"><path d="M14 3v14l-8-7z" fill="#72728a"/></svg></button><button aria-label="Suivant"><svg viewBox="0 0 20 20"><path d="M6 3v14l8-7z" fill="#72728a"/></svg></button><button aria-label="Dernier"><svg viewBox="0 0 20 20"><path d="M15 3v14" stroke="#72728a" stroke-width="2"/><path d="M5 3v14l8-7z" fill="#72728a"/></svg></button>
    </div>
    <button class="active">Modèle</button><button>Vues 3D</button><button class="study">Etude de mouvement 1</button>
  </nav>

  <footer class="status">
    <span class="edition">SOLIDWORKS Premium 2017 x64 Edition</span>
    <span class="cell">Sous-contraint</span>
    <span class="cell mode">Edition: Assemblage</span>
    <span class="cell units">MMGS<i class="caret up"></i></span>
    <svg viewBox="0 0 20 20"><path d="M1 5l8-4 10 5v6l-7 7L1 12z" fill="#ddd" stroke="#333" stroke-width="1.300"/><path d="M1 5l11 7 7-6M12 12v7" fill="none" stroke="#333"/><circle cx="10" cy="6" r="2.500" fill="#fff" stroke="#333"/></svg>
  </footer>

  <div class="taskbar">
    <button class="start" aria-label="Démarrer"><svg viewBox="0 0 20 20"><path d="M0 3l8-1v7H0zM9 1.800L20 0v9H9zM0 10h8v7.500L0 17zM9 10h11v10L9 18z" fill="#fff"/></svg></button>
    <div class="cortana">
      <i class="ring"></i>
      <input type="text" aria-label="Recherche" placeholder="Taper ici pour rechercher">
      <svg viewBox="0 0 20 20"><rect x="7" y="0" width="6" height="12" rx="1" fill="none" stroke="#222" stroke-width="1.400"/><path d="M4 9v3q0 4 4 4h4q4 0 4-4V9M10 16v4M7 19h6" fill="none" stroke="#222" stroke-width="1.400"/></svg>
    </div>
    <button class="task-view" aria-label="Vue des tâches"><svg viewBox="0 0 20 20"><path d="M1 0v3h12V0M1 6h12v8H1zM1 20v-3h12v3M18 0v4M18 11v9" fill="none" stroke="#fff" stroke-width="1.300"/><path d="M17 6h3v3h-3z" fill="#fff"/></svg></button>
    <nav class="apps">
      <button aria-label="Edge"><svg viewBox="0 0 28 28"><path d="M2 12C4 3 10 1 15 1c8 0 12 6 12 15H10c1 7 10 7 15 4v6c-8 4-21 2-21-10 1-5 4-7 7-9-2 2-2 4-2 5h10c0-8-11-7-17 0z" fill="#0a78d7"/></svg></button>
      <button class="open" aria-label="Explorateur de fichiers"><svg viewBox="0 0 28 28"><path d="M0 2h12l2 3h14v20H0z" fill="#ffe593"/><path d="M0 2h12v4H0z" fill="#fbc02d"/><path d="M5 26V16h18v10h-4v-5H9v5z" fill="#36ade4"/></svg></button>
      <button aria-label="Store"><svg viewBox="0 0 28 28"><path d="M9 8c0-9 10-9 10 0" fill="none" stroke="#ddd" stroke-width="2"/><path d="M0 7h28v21H0z" fill="#fff"/><path d="M7 11h6v6H7z" fill="#f25022"/><path d="M14 11h6v6h-6z" fill="#7fba00"/><path d="M7 18h6v6H7z" fill="#00a4ef"/><path d="M14 18h6v6h-6z" fill="#ffb900"/></svg></button>
      <button aria-label="Courrier"><svg viewBox="0 0 28 28"><path d="M0 9l14-8 14 8v17H0z" fill="#fff"/><path d="M0 9h28L15 16l8 7L0 10z" fill="#333"/></svg></button>
      <button aria-label="Opera"><svg viewBox="0 0 28 28"><ellipse cx="14" cy="14" rx="14" ry="14" fill="#d9121f"/><path d="M20 3c10 4 10 18 0 22z" fill="#f5443f"/><ellipse cx="14" cy="14" rx="6" ry="11" fill="#333"/></svg></button>
      <button class="open" aria-label="Photos"><svg viewBox="0 0 28 28"><path d="M2 1h25v26H2z" fill="#fff"/><path d="M3 2h23v12l-3-4-3 5 3 5-11-14L4 21H3z" fill="#333"/></svg></button>
      <button class="open current" aria-label="SOLIDWORKS 2017"><svg viewBox="0 0 28 28"><path d="M0 5l14-5 13 4v19l-12 5-15-5z" fill="#8d0a10"/><path d="M0 5l14-5 13 4-12 4z" fill="#e9232a"/><path d="M0 5l15 3v20L0 23z" fill="#c3131a"/><text class="sw" x="3" y="19">S</text><text class="sw" x="13" y="19">W</text><text class="year" x="10" y="27">2017</text></svg></button>
    </nav>
    <div class="tray">
      <button class="people" aria-label="Contacts"><svg viewBox="0 0 20 20"><circle cx="14" cy="4" r="3.500" fill="none" stroke="#fff" stroke-width="1.500"/><circle cx="7" cy="11" r="3.200" fill="none" stroke="#fff" stroke-width="1.500"/><path d="M11 9c4-2 8 0 8 5M1 20c0-7 11-7 11 0" fill="none" stroke="#fff" stroke-width="1.500"/></svg></button>
      <button aria-label="Icônes cachées"><svg viewBox="0 0 20 20"><path d="M2 14l8-8 8 8" fill="none" stroke="#fff" stroke-width="1.600"/></svg></button>
      <button aria-label="Batterie"><svg viewBox="0 0 20 20"><path d="M1 5h16v10H1zM17 8h2v4h-2" fill="none" stroke="#fff" stroke-width="1.400"/><path d="M3 7h9v6H3z" fill="#fff"/></svg></button>
      <button aria-label="Réseau"><svg viewBox="0 0 20 20"><path d="M5 19C5 10 11 5 20 4M9 19c0-6 4-10 11-11M13 19c0-3 2-6 7-7" fill="none" stroke="#888" stroke-width="1.400"/><circle cx="17" cy="18" r="1.700" fill="#999"/><path d="M3 1v6M0 4h6M1 2l4 4M5 2L1 6" stroke="#fff"/></svg></button>
      <button aria-label="Volume"><svg viewBox="0 0 20 20"><path d="M0 7h3l5-4v14l-5-4H0zM11 7q2 3 0 6M14 5q3 5 0 10M17 3q4 7 0 14" fill="none" stroke="#fff" stroke-width="1.300"/></svg></button>
      <button class="lang">FRA</button>
      <button class="clock">04:12<br>18/04/2019</button>
      <button class="notif" aria-label="Notifications"><svg viewBox="0 0 20 20"><path d="M1 1h18v15h-6l-3 3v-3H1z" fill="none" stroke="#fff" stroke-width="1.600"/></svg></button>
    </div>
  </div>
  <script src="scene.js"></script>
</body>
</html>
```

FILE: styles.css
```
* {
  margin: 0;
  padding: 0;
  box-sizing: border-box;
}
body {
  height: 100vh;
  display: flex;
  flex-direction: column;
  overflow: hidden;
  background: #f7f7f7;
  color: #111;
  font-family: 'Open Sans', 'Noto Sans', sans-serif;
  font-size: 13px;
  line-height: 19px;
  white-space: nowrap;
}
button, input {
  font: inherit;
  color: inherit;
  background: none;
  border: none;
}
button {
  display: flex;
  align-items: center;
  justify-content: center;
}
svg {
  display: block;
  width: 18px;
  height: 18px;
  flex: none;
}
.defs {
  position: absolute;
  width: 0;
  height: 0;
}
.caret {
  width: 13px;
  display: flex;
  justify-content: center;
}
.caret::after {
  content: "";
  border: 3px solid transparent;
  border-top: 4px solid #333;
  border-bottom: none;
}
.caret.soft::after {
  border-top-color: #888;
}
.caret.up::after {
  border-top: none;
  border-bottom: 4px solid #333;
}

/* Barre de titre */
.titlebar {
  display: flex;
  align-items: center;
  height: 34px;
  border-bottom: 1px solid #828282;
}
.brand {
  display: flex;
  align-items: center;
  width: 145px;
  height: 33px;
  margin-left: 10px;
  padding-left: 4px;
  border-left: 1px solid #828282;
  border-right: 1px solid #828282;
  background: linear-gradient(135deg, #fff 50%, #d4d4d4);
}
.ds {
  width: 30px;
  height: 30px;
}
.logo {
  margin-left: 3px;
  padding-top: 6px;
  color: #da2a1c;
  font-family: Lato, sans-serif;
  font-size: 16px;
  font-style: italic;
}
.logo b {
  font-weight: 900;
}
.menu {
  display: flex;
  align-items: center;
  width: 452px;
  height: 34px;
  padding: 2px 0 0 20px;
  border-right: 1px solid #828282;
  border-bottom: 1px solid #000;
}
.menu button {
  padding: 0 8px;
}
.menu .pin {
  margin-left: auto;
}
.menu .pin svg {
  width: 14px;
  height: 14px;
}
.quick, .view-tools {
  display: flex;
  align-items: center;
}
.quick {
  margin-left: 13px;
}
.quick button, .view-tools button, .doc-buttons button {
  width: 26px;
  height: 26px;
}
.pick {
  display: flex;
  align-items: center;
  width: 40px;
  border: 1px solid #828282;
}
.pick button {
  background: #b0b0b0;
}
.doc-title {
  flex: 1;
  padding-top: 2px;
  text-align: center;
  font-size: 13px;
  font-weight: 400;
}
.cmd-search {
  display: flex;
  align-items: center;
  width: 330px;
  height: 29px;
  padding-left: 6px;
  border: 1px solid #c3c3c3;
}
.cmd-search input {
  flex: 1;
  min-width: 0;
  height: 25px;
  margin-left: 8px;
  padding: 0 2px;
  background: #eaecf0;
}
.cmd-search input::placeholder {
  color: #666;
}
.cmd-search .prompt {
  width: 15px;
  height: 15px;
}
.cmd-search button {
  width: 32px;
}
.cmd-search button svg {
  width: 24px;
  height: 24px;
}
.win-buttons {
  display: flex;
  color: #444;
}
.win-buttons button {
  width: 26px;
}
.win-buttons .help {
  gap: 6px;
  width: 43px;
  padding-left: 8px;
  font-size: 18px;
  font-weight: 700;
}

/* Capture */
.capture-bar {
  display: flex;
  align-items: center;
  gap: 9px;
  height: 32px;
  border-bottom: 1px solid #828282;
}
.capture-bar .grip {
  width: 5px;
  height: 26px;
  margin: 0 1px 0 3px;
  border-left: 3px dotted #999;
}
.capture-bar button:last-child {
  align-self: stretch;
  padding-right: 12px;
  border-right: 1px solid #828282;
}
.capture-bar button:last-child svg {
  opacity: .25;
  filter: grayscale(1);
}

/* Ruban */
.ribbon {
  display: flex;
  height: 82px;
  padding: 1px 3px;
  border-bottom: 1px solid #828282;
}
.ribbon button {
  flex-direction: column;
  justify-content: flex-start;
  padding: 13px 5px 0;
}
.ribbon button svg {
  margin-bottom: 2px;
}
.ribbon .drop {
  padding-top: 6px;
}
.ribbon .drop .caret {
  margin-top: 20px;
}
.ribbon button:disabled {
  color: #b4b4b4;
}
.ribbon button:disabled svg {
  opacity: .25;
}
.ribbon hr {
  width: 1px;
  height: 78px;
  margin: 0 1px 0 0;
  border: none;
  background: #c3c3c3;
}
.ribbon .on {
  height: 78px;
  margin-right: 1px;
  padding: 12px 5px 0;
  border: 1px solid #6a6a6a;
  background: #b0b0b0;
}
.ribbon .more {
  justify-content: center;
  margin-left: auto;
  padding: 0;
  font-size: 18px;
}

/* Onglets du gestionnaire de commandes */
.tab-row {
  display: flex;
  height: 28px;
  background: #fff;
}
.tabs {
  display: flex;
  font-size: 14px;
}
.tabs button {
  padding: 0 12px;
  color: #333;
  background: #d3d3d3;
  border-right: 1px solid #828282;
  border-bottom: 1px solid #828282;
}
.tabs .active {
  background: #f7f7f7;
  font-weight: 700;
}
.tabs .narrow {
  padding: 0 9px;
}
.tabs .wide {
  padding: 0 17px;
}
.view-tools {
  margin-left: 56px;
  padding-top: 2px;
}
.doc-buttons {
  display: flex;
  margin-left: auto;
  padding: 2px 7px 0 0;
  color: #999;
}

/* Zone de travail */
.workspace {
  flex: 1;
  display: flex;
  min-height: 0;
}
.manager {
  position: relative;
  display: flex;
  flex-direction: column;
  width: 281px;
  padding-top: 2px;
  border-right: 1px solid #828282;
}
.splitter {
  display: flex;
  align-items: center;
  justify-content: center;
  height: 16px;
  margin-right: 2px;
  border: solid #c3c3c3;
  border-width: 1px 0;
}
.knob {
  width: 6px;
  height: 6px;
  border: 1px solid #999;
  border-radius: 50%;
  background: #ccc;
}
.manager-tabs {
  display: flex;
  height: 26px;
  margin: 4px 2px 0 0;
}
.manager-tabs button {
  width: 40px;
  background: #d3d3d3;
  border: 1px solid #828282;
  border-left: none;
}
.manager-tabs .active {
  background: #f7f7f7;
  border-bottom: none;
}
.manager-tabs .next {
  flex: 1;
  justify-content: flex-end;
  background: none;
  border-top: none;
  border-right: none;
}
.filter {
  display: flex;
  align-items: center;
  height: 32px;
  margin: 0 3px;
  padding-left: 2px;
  border: 1px solid #c3c3c3;
}
.filter input {
  flex: 1;
  min-width: 0;
}
.tree {
  list-style: none;
  margin-right: 2px;
  border-bottom: 3px solid #1c62c8;
  font-size: 14px;
}
.tree li {
  display: flex;
  align-items: center;
  gap: 5px;
  height: 24px;
  padding-left: 25px;
}
.tree .root {
  gap: 4px;
  padding-left: 3px;
}
.tree .node {
  padding-left: 8px;
}
.tree .node::before {
  content: "";
  margin-right: 7px;
  border: 4px solid transparent;
  border-left: 5px solid #666;
  border-right: none;
}
.tag3d {
  font-size: 10px;
  font-weight: 700;
}
.scrollbar {
  display: flex;
  height: 20px;
  margin: auto 2px 1px 0;
  background: #f0f0f0;
}
.scrollbar button {
  width: 20px;
}
.track {
  flex: 1;
}
.thumb {
  width: 53%;
  height: 19px;
  background: #cdcdcd;
}
.handle {
  position: absolute;
  left: 280px;
  top: 45%;
  z-index: 1;
  width: 12px;
  height: 49px;
  background: #f7f7f7;
  border: 1px solid #828282;
  border-left: none;
}
.viewport {
  position: relative;
  flex: 1;
  min-width: 0;
  background: #fff;
}
.scene {
  width: 100%;
  height: 100%;
}
.ink {
  stroke: #111;
  stroke-width: 1.3px;
  stroke-linejoin: round;
}
.thin {
  stroke-width: 1px;
}
.axis {
  font-size: 13px;
}
.task-pane {
  position: absolute;
  top: 29px;
  right: 0;
  border: 1px solid #828282;
  border-right: none;
}
.task-pane button {
  width: 32px;
  height: 30px;
  background: #d3d3d3;
  border-bottom: 1px solid #828282;
}
.task-pane .active {
  background: #f7f7f7;
}
.task-pane button:last-child {
  border-bottom: none;
}

/* Onglets du document */
.sheets {
  display: flex;
  height: 21px;
  padding-left: 27px;
  border-top: 1px solid #828282;
  border-bottom: 1px solid #828282;
  font-size: 15px;
}
.sheets > button {
  padding: 0 11px;
  color: #222;
  background: #d3d3d3;
  border-right: 1px solid #828282;
}
.sheets > .active {
  padding: 0 15px;
  color: #000;
  background: #f7f7f7;
  font-weight: 700;
}
.sheets > .study {
  padding: 0 24px 0 16px;
}
.steps {
  display: flex;
  border-right: 1px solid #828282;
}
.steps button {
  width: 20px;
  background: #a9a9c0;
  border: 1px solid #8585a0;
}
.steps svg {
  width: 14px;
  height: 14px;
}

/* Barre d'état */
.status {
  display: flex;
  align-items: center;
  height: 21px;
  padding: 2px 0 0 1px;
  font-size: 14px;
}
.edition {
  margin-right: auto;
}
.cell {
  margin-right: 7px;
  padding: 0 6px 0 4px;
  border-right: 1px solid #c3c3c3;
}
.mode {
  margin-right: 15px;
  border-left: 1px solid #c3c3c3;
}
.units {
  display: flex;
  align-items: center;
  gap: 42px;
  width: 223px;
  margin: 0;
  padding-left: 60px;
  border-right: none;
  border-left: 1px solid #c3c3c3;
}
.status svg {
  width: 16px;
  height: 16px;
  margin-right: 4px;
}

/* Barre des tâches */
.taskbar {
  display: flex;
  height: 50px;
  background: #333;
  color: #fff;
}
.start {
  width: 60px;
}
.start svg, .task-view svg {
  width: 20px;
  height: 20px;
}
.cortana {
  display: flex;
  align-items: center;
  width: 430px;
  padding: 0 16px 0 12px;
  background: #f1f1f1;
  color: #333;
}
.ring {
  width: 26px;
  height: 26px;
  border: 4px solid #111;
  border-radius: 50%;
}
.cortana input {
  flex: 1;
  min-width: 0;
  margin-left: 12px;
  font-size: 16px;
}
.cortana input::placeholder {
  color: #444;
}
.cortana svg {
  width: 20px;
  height: 20px;
}
.task-view {
  width: 62px;
  padding-right: 2px;
}
.apps {
  display: flex;
}
.apps button {
  position: relative;
  width: 62px;
  height: 50px;
}
.apps svg {
  width: 28px;
  height: 28px;
  overflow: visible;
}
.apps .open::after {
  content: "";
  position: absolute;
  left: 6px;
  right: 5px;
  bottom: 0;
  height: 3px;
  background: #76b9ed;
}
.apps .current {
  background: #5c5c5c;
}
.apps .current::after {
  left: 0;
  right: 0;
}
.sw {
  fill: #fff;
  font-size: 14px;
  font-weight: 700;
}
.year {
  fill: #fff;
  font-size: 7px;
  font-weight: 700;
}
.tray {
  display: flex;
  margin-left: auto;
  padding-right: 6px;
  font-size: 14px;
}
.tray button {
  width: 30px;
}
.tray svg {
  width: 20px;
  height: 20px;
}
.tray .people {
  width: 60px;
}
.tray .lang {
  width: 42px;
}
.tray .clock {
  width: 85px;
  padding-left: 11px;
  line-height: 23px;
}
.tray .notif {
  width: 70px;
  border-right: 1px solid #777;
}
```

FILE: scene.js
```
// Bordure : blocs alternés vert / blanc le long de la dalle
const kerb = document.getElementById('kerb');
const edges = [262, 308, 348, 390, 433, 476, 520, 565, 610, 657, 705, 754, 804, 855, 907, 959, 1014, 1069, 1125, 1184];

const yTop = x => 643 + (x - 281) * 0.302;
const yMid = x => 648 + (x - 281) * 0.304;
const yLip = x => 654 + (x - 281) * 0.304;
const yLow = x => 672 + (x - 281) * 0.308;

function addFace(points, fill) {
  const p = document.createElementNS('http://www.w3.org/2000/svg', 'path');
  p.setAttribute('d', 'M' + points.map(pt => pt.join(' ')).join('L') + 'Z');
  p.setAttribute('fill', fill);
  kerb.appendChild(p);
}

for (let i = 0; i < edges.length - 1; i++) {
  const a = edges[i];
  const b = edges[i + 1];
  const green = i % 2 === 0;
  addFace([[a, yLip(a)], [b, yLip(b)], [b, yLow(b)], [a, yLow(a)]], green ? '#1eee1f' : '#e3e2e2');
  addFace([[a + 3, yMid(a + 3)], [b + 3, yMid(b + 3)], [b, yLip(b)], [a, yLip(a)]], green ? '#25fb26' : '#fff');
  addFace([[a + 15, yTop(a + 15)], [b + 15, yTop(b + 15)], [b + 3, yMid(b + 3)], [a + 3, yMid(a + 3)]], green ? '#25fb26' : '#fff');
}

// Face d'extrémité
addFace([[1184, 929], [1188, 924], [1199, 920], [1199, 945], [1184, 950]], '#10f312');
```
